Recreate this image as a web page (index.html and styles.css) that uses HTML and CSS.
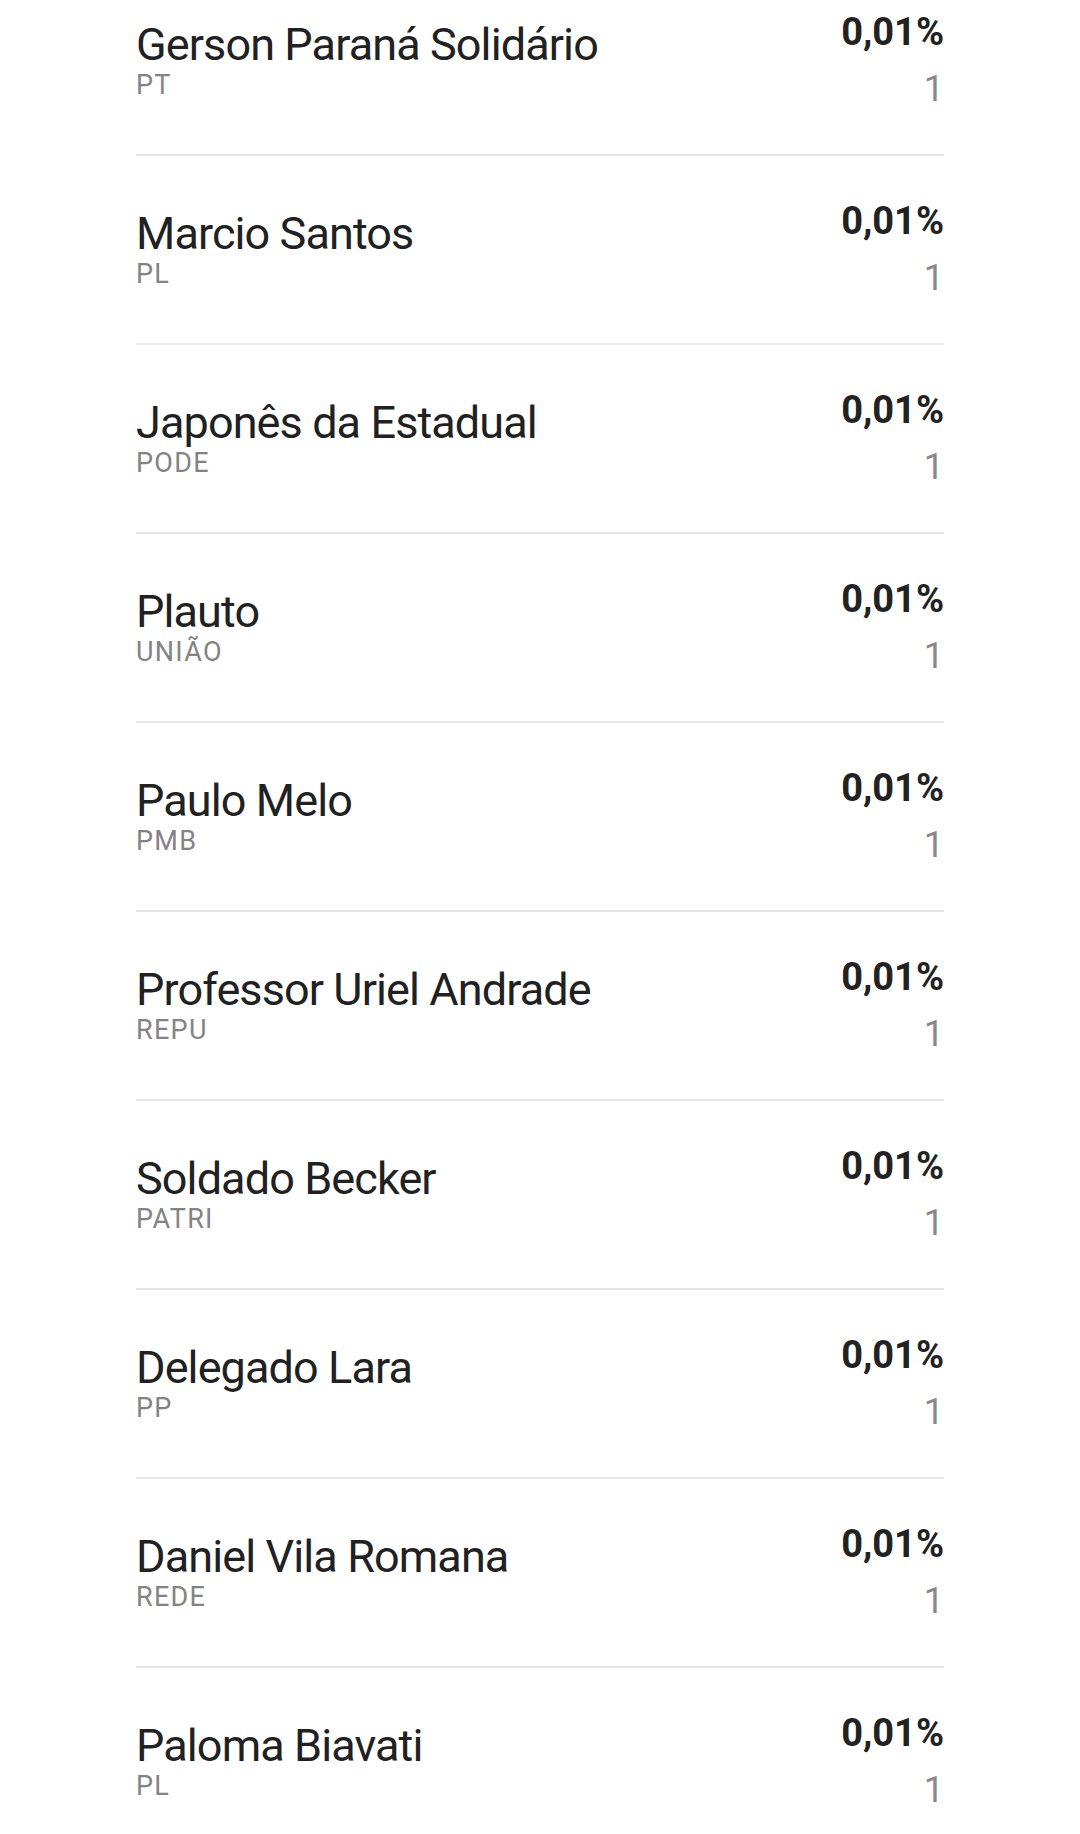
FILE: index.html
```html
<!DOCTYPE html>
<html lang="pt-BR">
<head>
<meta charset="utf-8">
<title>Resultados</title>
<link rel="stylesheet" href="styles.css">
</head>
<body>
<ul class="list">
  <li class="row"><div class="cand"><div class="name">Gerson Paraná Solidário</div><div class="party">PT</div></div><div class="nums"><div class="pct">0,01%</div><div class="votes">1</div></div></li>
  <li class="row"><div class="cand"><div class="name">Marcio Santos</div><div class="party">PL</div></div><div class="nums"><div class="pct">0,01%</div><div class="votes">1</div></div></li>
  <li class="row"><div class="cand"><div class="name">Japonês da Estadual</div><div class="party">PODE</div></div><div class="nums"><div class="pct">0,01%</div><div class="votes">1</div></div></li>
  <li class="row"><div class="cand"><div class="name">Plauto</div><div class="party">UNIÃO</div></div><div class="nums"><div class="pct">0,01%</div><div class="votes">1</div></div></li>
  <li class="row"><div class="cand"><div class="name">Paulo Melo</div><div class="party">PMB</div></div><div class="nums"><div class="pct">0,01%</div><div class="votes">1</div></div></li>
  <li class="row"><div class="cand"><div class="name">Professor Uriel Andrade</div><div class="party">REPU</div></div><div class="nums"><div class="pct">0,01%</div><div class="votes">1</div></div></li>
  <li class="row"><div class="cand"><div class="name">Soldado Becker</div><div class="party">PATRI</div></div><div class="nums"><div class="pct">0,01%</div><div class="votes">1</div></div></li>
  <li class="row"><div class="cand"><div class="name">Delegado Lara</div><div class="party">PP</div></div><div class="nums"><div class="pct">0,01%</div><div class="votes">1</div></div></li>
  <li class="row"><div class="cand"><div class="name">Daniel Vila Romana</div><div class="party">REDE</div></div><div class="nums"><div class="pct">0,01%</div><div class="votes">1</div></div></li>
  <li class="row"><div class="cand"><div class="name">Paloma Biavati</div><div class="party">PL</div></div><div class="nums"><div class="pct">0,01%</div><div class="votes">1</div></div></li>
</ul>
</body>
</html>
```

FILE: styles.css
```css
html, body {
  margin: 0;
  padding: 0;
  background: #ffffff;
  overflow: hidden;
}

body {
  font-family: Roboto, "Open Sans", "Liberation Sans", sans-serif;
  color: #222222;
}

.list {
  list-style: none;
  margin: -33px auto 0;
  padding: 0;
  width: 808px;
}

.row {
  box-sizing: border-box;
  height: 189px;
  border-bottom: 2px solid #e6e6e6;
  display: flex;
  justify-content: space-between;
  align-items: flex-start;
  padding-top: 43px;
}

.cand {
  margin-top: 9px;
  display: flex;
  flex-direction: column;
}

.name {
  font-size: 45px;
  line-height: 52px;
  letter-spacing: -0.9px;
  color: #212121;
}

.party {
  margin-top: 0;
  font-size: 27px;
  line-height: 28px;
  letter-spacing: 1.3px;
  color: #838383;
}

.nums {
  display: flex;
  flex-direction: column;
  align-items: flex-end;
}

.pct {
  font-size: 38px;
  line-height: 44px;
  font-weight: 700;
  color: #222222;
}

.votes {
  margin-top: 13px;
  font-size: 36px;
  line-height: 44px;
  color: #888888;
}
```
